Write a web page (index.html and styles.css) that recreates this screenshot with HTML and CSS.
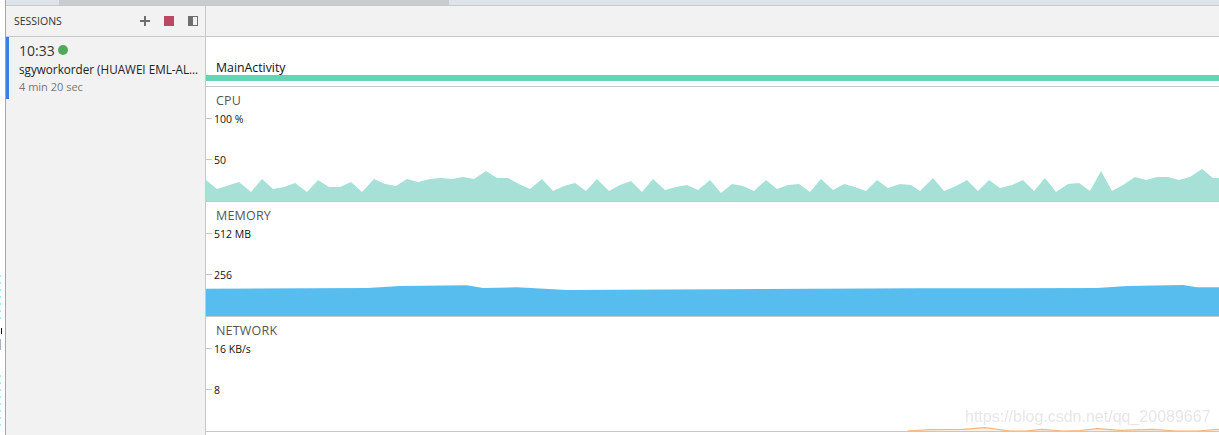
FILE: index.html
```html
<!DOCTYPE html>
<html lang="en">
<head>
    <meta charset="UTF-8">
    <meta name="viewport" content="width=device-width, initial-scale=1.0">
    <title>Profiler</title>
    <link rel="stylesheet" href="styles.css">
</head>
<body>
<div class="scrollbar">
    <div class="scroll-start"></div>
    <div class="scroll-thumb"></div>
</div>
<div class="main">
    <div class="edge">
        <div class="edge-dots"></div>
        <div class="edge-mark"></div>
        <div class="edge-grey"></div>
        <div class="edge-dots edge-dots-low"></div>
    </div>

    <!-- sessions panel -->
    <div class="sessions">
        <div class="sessions-head">
            <span class="sessions-title">SESSIONS</span>
            <svg class="icon icon-plus" width="10" height="10" viewBox="0 0 10 10">
                <path d="M5 0v10M0 5h10" stroke="#6e6e6e" stroke-width="2" fill="none"/>
            </svg>
            <span class="icon-stop"></span>
            <svg class="icon icon-panel" width="10" height="10" viewBox="0 0 10 10">
                <rect x="0.5" y="0.5" width="9" height="9" fill="none" stroke="#6e6e6e"/>
                <rect x="0" y="0" width="5" height="10" fill="#6e6e6e"/>
            </svg>
        </div>
        <div class="session">
            <div class="session-time">10:33 <span class="session-dot"></span></div>
            <div class="session-name">sgyworkorder (HUAWEI EML-AL…</div>
            <div class="session-length">4 min 20 sec</div>
        </div>
    </div>

    <!-- timeline -->
    <div class="timeline">
        <div class="toolbar"></div>
        <div class="activity">
            <div class="activity-name">MainActivity</div>
            <div class="activity-bar"></div>
        </div>

        <div class="track track-cpu">
            <div class="track-title">CPU</div>
            <div class="track-body">
                <svg class="chart" width="1013" height="93" viewBox="206 108 1013 93" preserveAspectRatio="none">
                    <polygon fill="#a6e0d6" points="206,180 217,189 239,182 251,192 262,179 273,189 284,187 295,183 307,192 318,180 329,187 340,187 351,182 362,192 374,179 385,184 396,186 407,179 418,182 430,179 441,178 452,179 463,177 474,179 486,171 497,178 508,178 519,184 530,189 542,179 553,191 564,186 575,183 586,191 597,179 609,191 620,185 631,181 642,192 653,179 665,190 676,187 687,185 698,190 710,180 721,193 732,184 743,186 754,191 766,180 777,189 788,185 799,184 810,192 821,179 833,190 844,184 855,187 866,191 877,180 888,188 900,184 911,185 920,191 933,178 944,191 956,186 967,180 978,191 989,180 1000,188 1012,185 1023,180 1034,191 1045,178 1056,192 1068,184 1079,183 1090,191 1101,171 1112,191 1123,185 1135,177 1146,180 1157,177 1168,177 1179,180 1190,177 1202,169 1213,178 1219,178 1219,202 206,202"/>
                </svg>
                <div class="axis">
                    <div class="tick">100 %</div>
                    <div class="tick">50</div>
                </div>
            </div>
        </div>

        <div class="track track-memory">
            <div class="track-title">MEMORY</div>
            <div class="track-body">
                <svg class="chart" width="1013" height="93" viewBox="206 223 1013 93" preserveAspectRatio="none">
                    <polygon fill="#57bdee" points="206,288.7 367,288 400,286 467,285.3 483,288 517,287.3 567,290 720,289.3 920,288.3 1097,288 1127,286 1183,285 1197,287.3 1219,287.3 1219,317 206,317"/>
                </svg>
                <div class="axis">
                    <div class="tick">512 MB</div>
                    <div class="tick">256</div>
                </div>
            </div>
        </div>

        <div class="track track-network">
            <div class="track-title">NETWORK</div>
            <div class="track-body">
                <svg class="chart" width="1013" height="93" viewBox="206 338 1013 93" preserveAspectRatio="none">
                    <polygon fill="#fdf0e3" points="907,431 930,429.7 963,429.3 985,427.7 1010,431 1025,431 1042,429.3 1063,431 1080,430.5 1098,428.7 1120,430.3 1153,429.3 1177,431 1197,431 1219,429.3 1219,432 907,432"/>
                    <polyline fill="none" stroke="#f6b579" stroke-width="1.2" points="907,431 930,429.7 963,429.3 985,427.7 1010,431 1025,431 1042,429.3 1063,431 1080,430.5 1098,428.7 1120,430.3 1153,429.3 1177,431 1197,431 1219,429.3"/>
                </svg>
                <div class="axis">
                    <div class="tick">16 KB/s</div>
                    <div class="tick">8</div>
                </div>
            </div>
        </div>
        <div class="watermark">https://blog.csdn.net/qq_20089667</div>
    </div>
</div>
</body>
</html>
```

FILE: styles.css
```css
html, body {
    margin: 0;
    padding: 0;
    height: 435px;
    overflow: hidden;
    background-color: white;
}
body {
    font-family: "Open Sans", "Liberation Sans", sans-serif;
    font-size: 11px;
    color: #222;
}
.scrollbar {
    display: flex;
    height: 5px;
    margin-left: 5px;
    border-left: 1px solid #a6a6a6;
    background-color: #dfe3ec;
}
.scroll-start {
    width: 53px;
}
.scroll-thumb {
    width: 390px;
    background-color: #c9cccf;
}
.main {
    display: flex;
    height: 430px;
}
.edge {
    width: 5px;
    flex-shrink: 0;
    background-color: white;
    display: flex;
    flex-direction: column;
    padding-top: 270px;
    box-sizing: border-box;
}
.edge-dots {
    width: 1px;
    height: 48px;
    background-image: repeating-linear-gradient(#9feef2 0 2px, transparent 2px 7px);
}
.edge-dots-low {
    height: 55px;
    margin-top: 25px;
}
.edge-mark {
    width: 1px;
    height: 6px;
    margin: 5px 0 0 1px;
    background-color: #111;
}
.edge-grey {
    width: 1px;
    height: 11px;
    margin-top: 5px;
    background-color: #a9b2c2;
}
.sessions {
    width: 201px;
    flex-shrink: 0;
    box-sizing: border-box;
    background-color: #f2f2f2;
    border-left: 1px solid #a6a6a6;
    border-right: 1px solid #c8c8c8;
}
.sessions-head {
    display: flex;
    align-items: center;
    height: 30px;
    padding: 0 7px 0 8px;
    border-top: 1px solid #c8c8c8;
    border-bottom: 1px solid #c8c8c8;
}
.sessions-title {
    flex: 1;
    font-size: 10.5px;
    color: #333;
}
.icon-plus {
    margin-right: 14px;
}
.icon-stop {
    width: 10px;
    height: 10px;
    margin-right: 14px;
    background-color: #bc4664;
}
.session {
    border-left: 3px solid #3a7fe3;
    height: 62px;
    padding: 4px 7px 0 10px;
    box-sizing: border-box;
}
.session-time {
    font-size: 14px;
    line-height: 19px;
    margin-bottom: 1px;
    color: #333;
}
.session-dot {
    display: inline-block;
    width: 10px;
    height: 10px;
    vertical-align: 1px;
    border-radius: 50%;
    background-color: #52a95a;
}
.session-name {
    font-size: 11.7px;
    line-height: 17px;
    white-space: nowrap;
    color: #222;
}
.session-length {
    font-size: 11px;
    line-height: 17px;
    color: #777;
}
.timeline {
    flex: 1;
    min-width: 0;
    position: relative;
}
.toolbar {
    height: 30px;
    background-color: #f2f2f2;
    border-top: 1px solid #c8c8c8;
    border-bottom: 1px solid #c8c8c8;
}
.activity {
    height: 49px;
    border-bottom: 1px solid #c8c8c8;
    display: flex;
    flex-direction: column;
    justify-content: flex-end;
}
.activity-name {
    font-size: 12.3px;
    line-height: 16px;
    padding-left: 10px;
    margin-bottom: -1px;
    color: #111;
}
.activity-bar {
    height: 6px;
    margin-bottom: 5px;
    background-color: #63d5b5;
}
.track {
    height: 115px;
    box-sizing: border-box;
    border-bottom: 1px solid #c8c8c8;
    display: flex;
    flex-direction: column;
}
.track-title {
    height: 15px;
    padding: 6px 0 0 10px;
    font-size: 12.5px;
    letter-spacing: 0.2px;
    line-height: 16px;
    color: #555;
}
.track-body {
    flex: 1;
    display: grid;
    min-height: 0;
}
.chart {
    grid-area: 1 / 1;
    align-self: end;
    width: 100%;
    display: block;
}
.axis {
    grid-area: 1 / 1;
    display: flex;
    flex-direction: column;
    gap: 25px;
    padding-top: 3px;
}
.tick {
    display: flex;
    align-items: center;
    height: 16px;
    font-size: 10.5px;
    color: #111;
}
.tick::before {
    content: "";
    width: 6px;
    height: 1px;
    margin-right: 2px;
    margin-bottom: 2px;
    background-color: #c8c8c8;
}
.watermark {
    position: absolute;
    left: 759px;
    top: 403px;
    font-family: "Liberation Sans", Arial, sans-serif;
    font-size: 16px;
    color: #e7e7e7;
    filter: blur(0.4px);
}
```
